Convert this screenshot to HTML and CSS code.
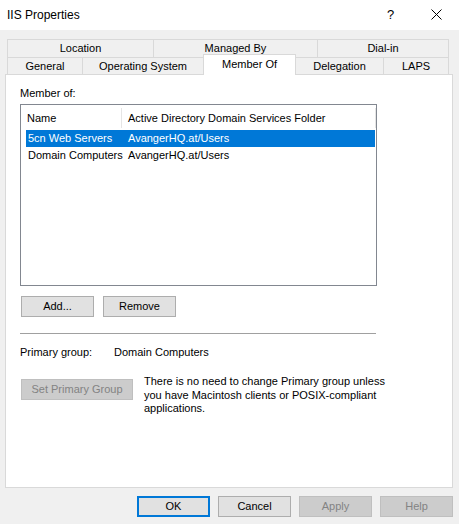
FILE: index.html
```html
<!DOCTYPE html>
<html>
<head>
<meta charset="utf-8">
<link rel="stylesheet" href="styles.css">
</head>
<body>
<div class="window">
  <div class="titlebar">
    <span class="title">IIS Properties</span>
    <span class="help-q">?</span>
    <span class="close">
      <svg width="11" height="11" viewBox="0 0 11 11"><path d="M0.5 0.5 L10.5 10.5 M10.5 0.5 L0.5 10.5" stroke="#000" stroke-width="1" fill="none"/></svg>
    </span>
  </div>

  <div class="tabs">
    <div class="tabrow">
      <div class="tab w146">Location</div>
      <div class="tab w164">Managed By</div>
      <div class="tab w132 last">Dial-in</div>
    </div>
    <div class="tabrow">
      <div class="tab w75">General</div>
      <div class="tab w121">Operating System</div>
      <div class="tab w93 selected">Member Of</div>
      <div class="tab w87">Delegation</div>
      <div class="tab w66 last">LAPS</div>
    </div>
  </div>

  <div class="panel">
    <div class="label">Member of:</div>
    <div class="listview">
      <div class="lv-header">
        <div class="lv-h c1">Name</div>
        <div class="lv-h c2">Active Directory Domain Services Folder</div>
      </div>
      <div class="lv-row sel">
        <div class="lv-c c1">5cn Web Servers</div>
        <div class="lv-c c2">AvangerHQ.at/Users</div>
      </div>
      <div class="lv-row">
        <div class="lv-c c1">Domain Computers</div>
        <div class="lv-c c2">AvangerHQ.at/Users</div>
      </div>
    </div>
    <div class="btnrow">
      <div class="btn">Add...</div>
      <div class="btn">Remove</div>
    </div>
    <div class="sep"></div>
    <div class="pgrow">
      <span class="pglabel">Primary group:</span>
      <span>Domain Computers</span>
    </div>
    <div class="setrow">
      <div class="btn disabled wide">Set Primary Group</div>
      <div class="desc">There is no need to change Primary group unless<br>you have Macintosh clients or POSIX-compliant<br>applications.</div>
    </div>
  </div>

  <div class="footer">
    <div class="btn default">OK</div>
    <div class="btn">Cancel</div>
    <div class="btn disabled">Apply</div>
    <div class="btn disabled">Help</div>
  </div>
</div>
</body>
</html>
```

FILE: styles.css
```css
* { box-sizing: border-box; }
html, body {
  margin: 0;
  padding: 0;
}
body {
  width: 459px;
  height: 524px;
  overflow: hidden;
  background: #f0f0f0;
  font-family: "Liberation Sans", Arial, sans-serif;
  font-size: 11px;
  color: #000;
}
.window {
  width: 459px;
  height: 524px;
}
.titlebar {
  height: 30px;
  background: #fff;
  display: flex;
  align-items: center;
  position: relative;
}
.title {
  padding-left: 7px;
  font-size: 12px;
  flex: 1;
  margin-top: -1px;
}
.help-q {
  font-size: 13px;
  width: 9px;
  margin-right: 35px;
  margin-top: -2px;
}
.close {
  display: flex;
  margin-right: 17px;
  margin-top: -2px;
}
.tabs {
  margin: 9px 0 0 7px;
  width: 442px;
}
.tabrow {
  display: flex;
}
.tab {
  background: #f0f0f0;
  border-top: 1px solid #d9d9d9;
  border-left: 1px solid #d9d9d9;
  text-align: center;
  height: 18px;
  line-height: 16px;
  white-space: nowrap;
}
.tabrow + .tabrow .tab {
  height: 17px;
  line-height: 16px;
}
.tab.last { border-right: 1px solid #d9d9d9; }
.w146 { width: 146px; }
.w164 { width: 164px; }
.w132 { width: 132px; }
.w75 { width: 75px; }
.w121 { width: 121px; }
.w93 { width: 93px; }
.w87 { width: 87px; }
.w66 { width: 66px; }
.tabrow + .tabrow .tab.selected {
  background: #fff;
  border-right: 1px solid #d9d9d9;
  height: 21px;
  margin-top: -3px;
  margin-bottom: -1px;
  line-height: 13px;
  padding-top: 3px;
  position: relative;
  z-index: 2;
}
.selected + .tab { border-left: none; }
.panel {
  margin-left: 5px;
  width: 448px;
  height: 414px;
  background: #fff;
  border: 1px solid #d9d9d9;
  padding: 12px 0 0 14px;
  position: relative;
  z-index: 1;
}
.label {
  line-height: 13px;
}
.listview {
  margin-top: 4px;
  width: 357px;
  height: 182px;
  border: 1px solid #828790;
  background: #fff;
}
.lv-header {
  display: flex;
  height: 25px;
  align-items: center;
}
.lv-h {
  height: 20px;
  line-height: 20px;
  border-right: 1px solid #e5e5e5;
  white-space: nowrap;
}
.lv-h.c1 { width: 101px; padding-left: 6px; }
.lv-h.c2 { width: 254px; padding-left: 6px; }
.lv-row {
  display: flex;
  margin-left: 5px;
  width: 349px;
  height: 17px;
  line-height: 17px;
  white-space: nowrap;
}
.lv-row.sel {
  background: #0078d7;
  color: #fff;
}
.lv-c { white-space: nowrap; flex-shrink: 0; }
.lv-c.c1 { width: 96px; padding-left: 2px; overflow: visible; }
.lv-c.c2 { padding-left: 6px; }
.btnrow {
  display: flex;
  gap: 9px;
  margin: 10px 0 0 1px;
}
.btn {
  width: 73px;
  height: 21px;
  line-height: 19px;
  text-align: center;
  background: #e1e1e1;
  border: 1px solid #adadad;
  white-space: nowrap;
}
.btn.disabled {
  background: #cccccc;
  border-color: #bfbfbf;
  color: #838383;
}
.btn.wide { width: 112px; }
.btn.default {
  border: 2px solid #0078d7;
  line-height: 17px;
}
.sep {
  margin-top: 16px;
  width: 356px;
  height: 1px;
  background: #a0a0a0;
}
.pgrow {
  margin-top: 12px;
  line-height: 13px;
  display: flex;
}
.pglabel { width: 94px; }
.setrow {
  display: flex;
  align-items: flex-start;
  margin-top: 16px;
}
.setrow .btn {
  margin: 4px 0 0 1px;
}
.desc {
  margin-left: 11px;
  line-height: 13.5px;
  white-space: nowrap;
}
.footer {
  display: flex;
  justify-content: flex-end;
  gap: 8px;
  margin-top: 8px;
  padding-right: 6px;
}
```
